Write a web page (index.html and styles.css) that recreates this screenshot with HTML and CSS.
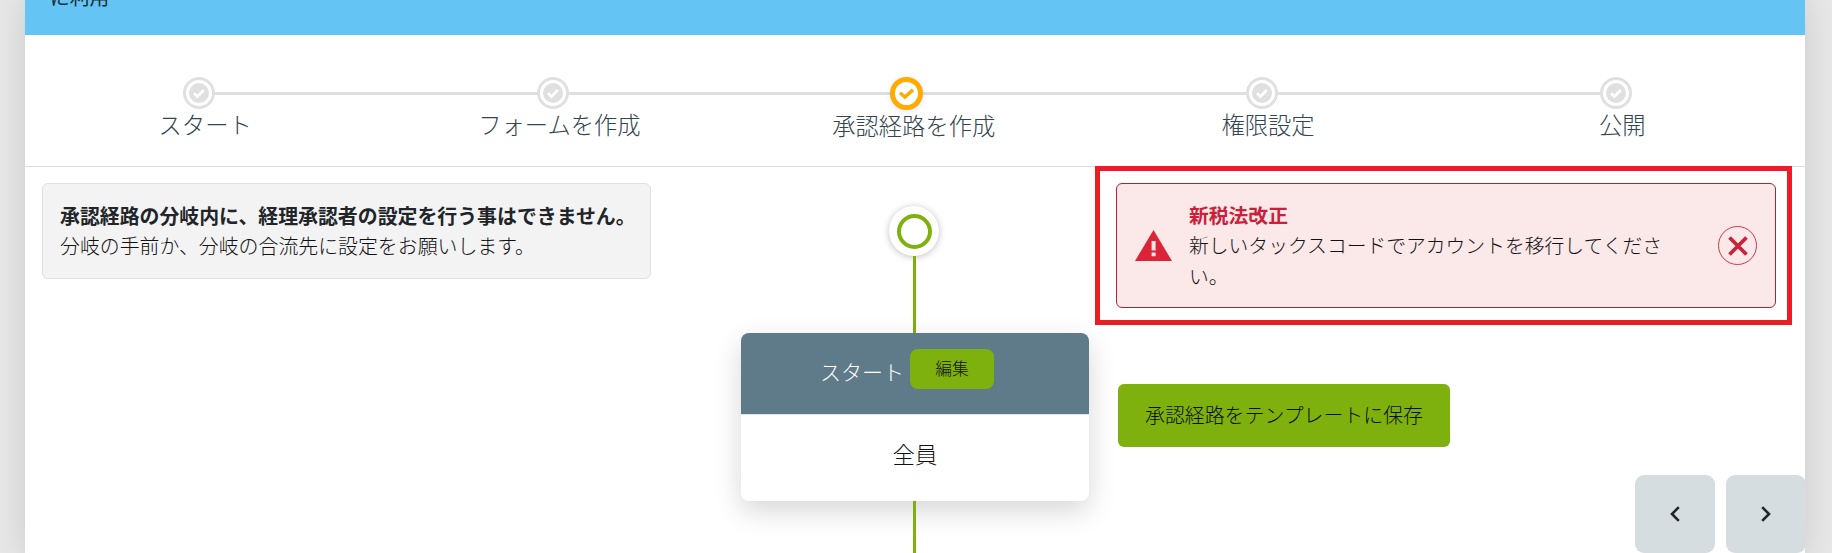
FILE: index.html
```html
<!DOCTYPE html>
<html lang="ja">
<head>
<meta charset="utf-8">
<title>承認経路を作成</title>
<link rel="stylesheet" href="styles.css">
</head>
<body>
<main class="panel">
  <div class="banner"><span>に利用</span></div>
  <ol class="stepper">
    <li class="step">
      <span class="dot"><svg class="check" viewBox="0 0 20 20"><circle cx="10" cy="10" r="10" fill="#e0e0e0"/><path d="M5 10.3l3.4 3.3 6.4-6.6" fill="none" stroke="#fff" stroke-width="2.8"/></svg></span>
      <span class="step-label">スタート</span>
    </li>
    <li class="step">
      <span class="dot"><svg class="check" viewBox="0 0 20 20"><circle cx="10" cy="10" r="10" fill="#e0e0e0"/><path d="M5 10.3l3.4 3.3 6.4-6.6" fill="none" stroke="#fff" stroke-width="2.8"/></svg></span>
      <span class="step-label">フォームを作成</span>
    </li>
    <li class="step">
      <span class="dot dot-active"><svg class="check-active" viewBox="0 0 14 10"><path d="M1 4.2l4.5 4.2L13 1.6" fill="none" stroke="#ffab00" stroke-width="3.2"/></svg></span>
      <span class="step-label">承認経路を作成</span>
    </li>
    <li class="step">
      <span class="dot"><svg class="check" viewBox="0 0 20 20"><circle cx="10" cy="10" r="10" fill="#e0e0e0"/><path d="M5 10.3l3.4 3.3 6.4-6.6" fill="none" stroke="#fff" stroke-width="2.8"/></svg></span>
      <span class="step-label">権限設定</span>
    </li>
    <li class="step">
      <span class="dot"><svg class="check" viewBox="0 0 20 20"><circle cx="10" cy="10" r="10" fill="#e0e0e0"/><path d="M5 10.3l3.4 3.3 6.4-6.6" fill="none" stroke="#fff" stroke-width="2.8"/></svg></span>
      <span class="step-label">公開</span>
    </li>
  </ol>
  <div class="content">
    <div class="col-left">
      <div class="info">
        <strong class="info-title">承認経路の分岐内に、経理承認者の設定を行う事はできません。</strong>
        <p class="info-body">分岐の手前か、分岐の合流先に設定をお願いします。</p>
      </div>
    </div>
    <div class="col-flow">
      <div class="start-node"><span class="start-ring"></span></div>
      <div class="connector connector-top"></div>
      <section class="card">
        <header class="card-head">
          <span class="card-title">スタート</span>
          <button class="edit" type="button">編集</button>
        </header>
        <div class="card-body">全員</div>
      </section>
      <div class="connector connector-bottom"></div>
    </div>
    <div class="col-right">
      <div class="annotation">
        <div class="alert">
          <svg class="alert-icon" viewBox="0 0 37 31"><path d="M18.5 0L37 31H0z" fill="#dc2338"/><path d="M16.6 11h4v9.5h-4zM16.6 22.5h4v3.8h-4z" fill="#fae6e7"/></svg>
          <div class="alert-text">
            <strong class="alert-title">新税法改正</strong>
            <p class="alert-body">新しいタックスコードでアカウントを移行してください。</p>
          </div>
          <span class="alert-close"><svg class="close-x" viewBox="0 0 20 20"><path d="M1.5 1.5l17 17M18.5 1.5l-17 17" fill="none" stroke="#c8233a" stroke-width="3.8"/></svg></span>
        </div>
      </div>
      <button class="save" type="button">承認経路をテンプレートに保存</button>
      <div class="pager">
        <button class="page-btn" type="button" aria-label="前へ"><svg class="chev" viewBox="0 0 10 16"><path d="M8.8 1.2L2 8l6.8 6.8" fill="none" stroke="#212529" stroke-width="2.6"/></svg></button>
        <button class="page-btn" type="button" aria-label="次へ"><svg class="chev" viewBox="0 0 10 16"><path d="M1.2 1.2L8 8l-6.8 6.8" fill="none" stroke="#212529" stroke-width="2.6"/></svg></button>
      </div>
    </div>
  </div>
</main>
</body>
</html>
```

FILE: styles.css
```css
* { box-sizing: border-box; }
html, body { margin: 0; height: 553px; overflow: hidden; }
body {
  background: #e6e6e6;
  color: #212529;
  font-family: "Noto Sans CJK JP", "Noto Sans", sans-serif;
  font-size: 19.8px;
}
p { margin: 0; }
button { font-family: inherit; border: 0; color: inherit; padding: 0; }

.panel {
  width: 1780px;
  height: 553px;
  margin-left: 25px;
  background: #fff;
  box-shadow: 0 0 28px rgba(0, 0, 0, .12);
}

.banner {
  height: 35px;
  background: #64c4f4;
  display: flex;
  align-items: flex-end;
  padding: 0 0 23px 25px;
  line-height: 30px;
  color: #1d2a36;
}

.stepper {
  position: relative;
  height: 132px;
  margin: 0;
  padding: 42px 3px 0;
  list-style: none;
  display: grid;
  grid-template-columns: repeat(5, 354.3px);
  border-bottom: 1px solid #dedede;
}
.stepper::before {
  content: "";
  position: absolute;
  left: 173px;
  width: 1418px;
  top: 56.5px;
  height: 3px;
  background: #e0e0e0;
}
.step {
  display: flex;
  flex-direction: column;
  align-items: center;
}
.dot {
  position: relative;
  width: 32px;
  height: 32px;
  margin-right: 13px;
  padding: 3px;
  border: 3px solid #e0e0e0;
  border-radius: 50%;
  background: #fff;
  display: flex;
  align-items: center;
  justify-content: center;
}
.check { width: 20px; height: 20px; display: block; flex: none; }
.dot-active {
  width: 33px;
  height: 33px;
  margin-top: -.5px;
  margin-right: 14px;
  border: 5px solid #ffab00;
  box-shadow: 0 1px 5px rgba(80, 110, 255, .22);
}
.check-active { width: 15px; height: 11px; display: block; flex: none; }
.step-label {
  margin-top: -1px;
  font-size: 23.3px;
  line-height: 33px;
  font-weight: 300;
  color: #33454f;
}

.content {
  display: flex;
  padding: 16px 0 0 17px;
}
.col-left { width: 699px; flex: none; }
.info {
  width: 609px;
  padding: 17px 17px;
  background: #f3f3f3;
  border: 1px solid #e0e0e0;
  border-radius: 6px;
  font-size: 19.9px;
  line-height: 30px;
  white-space: nowrap;
}
.info-title { display: block; font-weight: 700; }
.info-body { font-weight: 300; color: #111; }

.col-flow {
  width: 348px;
  flex: none;
  display: flex;
  flex-direction: column;
  align-items: center;
  padding-top: 23px;
}
.start-node {
  width: 50px;
  height: 50px;
  margin-right: 2px;
  border-radius: 50%;
  background: #fff;
  box-shadow: 0 1px 7px rgba(0, 0, 0, .25);
  display: flex;
  align-items: center;
  justify-content: center;
}
.start-ring {
  width: 35px;
  height: 35px;
  border: 4px solid #7fb10e;
  border-radius: 50%;
}
.connector { width: 3px; background: #7fb10e; margin-right: 1px; }
.connector-top { height: 77px; }
.connector-bottom { height: 60px; }
.card {
  width: 348px;
  height: 168px;
  flex: none;
  border-radius: 8px;
  background: #fff;
  overflow: hidden;
  box-shadow: 0 10px 28px rgba(0, 0, 0, .16);
}
.card-head {
  height: 82px;
  background: #5f7b8a;
  border-bottom: 1px solid #e6e6e6;
  display: flex;
  align-items: center;
  justify-content: center;
  gap: 6px;
  padding-right: 16px;
  color: #fff;
}
.card-title { font-size: 21px; font-weight: 300; line-height: 30px; margin-top: -6px; }
.edit {
  width: 84px;
  height: 40px;
  margin-top: -9px;
  padding-bottom: 2px;
  border-radius: 8px;
  background: #7fb10e;
  color: #111;
  font-size: 16.8px;
  font-weight: 300;
}
.card-body {
  height: 86px;
  padding-bottom: 10px;
  display: flex;
  align-items: center;
  justify-content: center;
  font-size: 22.4px;
  font-weight: 300;
  color: #111;
}

.col-right {
  width: 711px;
  flex: none;
  margin-left: 6px;
  margin-top: -17px;
}
.annotation {
  position: relative;
  width: 697px;
  height: 159px;
  border: 5px solid #ed1c24;
  padding: 12px 0 0 16px;
}
.alert {
  width: 660px;
  height: 125px;
  background: #fbe8e9;
  border: 1px solid #a52834;
  border-radius: 6px;
  display: flex;
  align-items: center;
  padding-left: 18px;
}
.alert-icon { width: 37px; height: 31px; flex: none; margin-right: 17px; }
.alert-text { width: 490px; flex: none; line-height: 30.5px; }
.alert-title { display: block; font-weight: 700; color: #cb2039; }
.alert-body { font-weight: 300; color: #111; }
.alert-close {
  width: 39px;
  height: 39px;
  margin-left: 39px;
  border: 1px solid #cf3a4c;
  border-radius: 50%;
  display: flex;
  align-items: center;
  justify-content: center;
}
.close-x { width: 20px; height: 20px; display: block; }

.save {
  display: block;
  width: 332px;
  height: 63px;
  margin: 59px 0 0 23px;
  padding-bottom: 3px;
  border-radius: 6px;
  background: #7fb10e;
  color: #0c1004;
  font-size: 19.9px;
  font-weight: 300;
}
.pager {
  display: flex;
  justify-content: flex-end;
  gap: 11px;
  margin-top: 28px;
}
.page-btn {
  width: 80px;
  height: 78px;
  border-radius: 9px;
  background: #d6dde1;
  display: flex;
  align-items: center;
  justify-content: center;
}
.chev { width: 10px; height: 16px; display: block; }
```
